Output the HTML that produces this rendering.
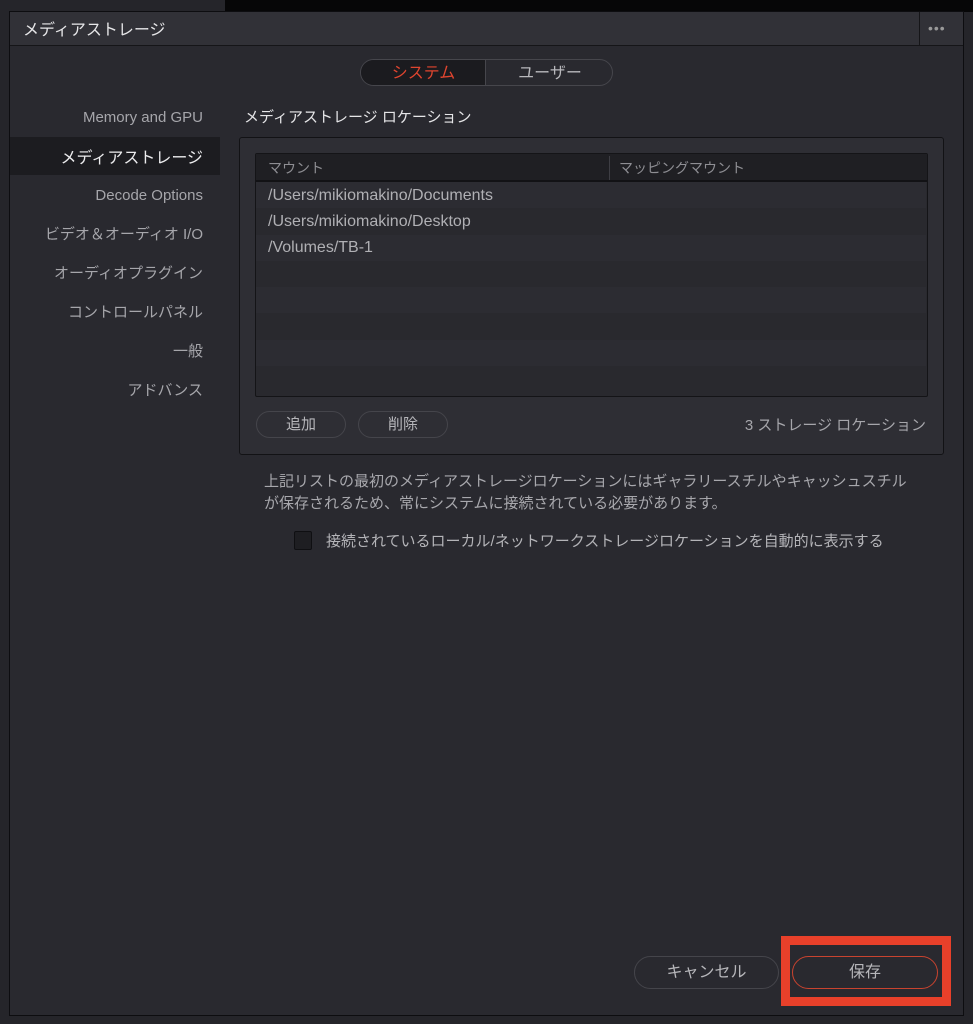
<!DOCTYPE html>
<html><head><meta charset="utf-8"><style>
*{margin:0;padding:0;box-sizing:border-box}
body{width:973px;height:1024px;background:#25252a;position:relative;overflow:hidden;font-family:"Liberation Sans","Noto Sans CJK JP",sans-serif;color:#b8b8bc}
.a{position:absolute}
.blk{left:225px;top:0;width:748px;height:12px;background:#060607}
.dlg{left:9px;top:11px;width:955px;height:1005px;background:#29292f;border:1px solid #0d0d10}
.title{left:10px;top:12px;width:953px;height:34px;background:#313137;border-bottom:1px solid #151518}
.t{font-size:16px;color:#e6e6e8}
.side{font-size:15px;color:#a6a6ab;text-align:right;width:193px;left:10px}
.row{left:256px;width:670px;height:26px}
.cell{font-size:16px;color:#b0b0b4;left:268px}
.btn{border:1px solid #45454b;border-radius:14px;height:27px;font-size:15px;color:#b6b6ba;text-align:center;line-height:25px}
</style></head><body>
<div class="a blk"></div>
<div class="a dlg"></div>
<div class="a title"></div>
<div class="a t" style="left:23px;top:16px">メディアストレージ</div>
<div class="a" style="left:919px;top:12px;width:1px;height:34px;background:#151518"></div>
<div class="a" style="left:928px;top:20px;font-size:14px;color:#999;letter-spacing:1px">•••</div>

<div class="a" style="left:360px;top:59px;width:253px;height:27px;border:1px solid #46464c;border-radius:14px;background:#29292f;overflow:hidden">
<div class="a" style="left:0;top:0;width:125px;height:25px;background:#1b1b1f;border-right:1px solid #46464c"></div>
<div class="a" style="left:0;top:2px;width:125px;text-align:center;font-size:16px;line-height:24px;color:#e0452f">システム</div>
<div class="a" style="left:126px;top:2px;width:126px;text-align:center;font-size:16px;line-height:24px;color:#b8b8bc">ユーザー</div>
</div>

<div class="a" style="left:10px;top:137px;width:210px;height:38px;background:#1c1c20"></div>
<div class="a side" style="top:109px">Memory and GPU</div>
<div class="a side" style="top:144px;color:#ececee;font-size:16px">メディアストレージ</div>
<div class="a side" style="top:187px">Decode Options</div>
<div class="a side" style="top:223px">ビデオ＆オーディオ I/O</div>
<div class="a side" style="top:262px">オーディオプラグイン</div>
<div class="a side" style="top:301px">コントロールパネル</div>
<div class="a side" style="top:340px">一般</div>
<div class="a side" style="top:379px">アドバンス</div>

<div class="a t" style="left:244px;top:106px;font-size:15px">メディアストレージ ロケーション</div>
<div class="a" style="left:239px;top:137px;width:705px;height:318px;background:#2e2e34;border:1px solid #121215;border-radius:3px"></div>
<div class="a" style="left:255px;top:153px;width:673px;height:244px;background:#29292e;border:1px solid #141417;border-radius:2px"></div>
<div class="a row" style="top:182px;background:#2c2c32"></div>
<div class="a row" style="top:235px;background:#2c2c32"></div>
<div class="a row" style="top:287px;background:#2c2c32"></div>
<div class="a row" style="top:340px;background:#2c2c32"></div>
<div class="a" style="left:256px;top:154px;width:671px;height:28px;background:#1f1f23;border-bottom:2px solid #121215"></div>
<div class="a" style="left:609px;top:156px;width:1px;height:24px;background:#3e3e44"></div>
<div class="a" style="left:268px;top:158px;font-size:14px;color:#8e8e93">マウント</div>
<div class="a" style="left:619px;top:158px;font-size:14px;color:#8e8e93">マッピングマウント</div>
<div class="a cell" style="top:187px">/Users/mikiomakino/Documents</div>
<div class="a cell" style="top:213px">/Users/mikiomakino/Desktop</div>
<div class="a cell" style="top:239px">/Volumes/TB-1</div>

<div class="a btn" style="left:256px;top:411px;width:90px">追加</div>
<div class="a btn" style="left:358px;top:411px;width:90px">削除</div>
<div class="a" style="left:680px;top:414px;width:246px;text-align:right;font-size:15px;color:#a6a6ab">3 ストレージ ロケーション</div>

<div class="a" style="left:264px;top:471px;font-size:15px;line-height:22px;color:#a8a8ad;width:690px">上記リストの最初のメディアストレージロケーションにはギャラリースチルやキャッシュスチル<br>が保存されるため、常にシステムに接続されている必要があります。</div>
<div class="a" style="left:294px;top:531px;width:18px;height:19px;background:#1e1e22;border:1px solid #0f0f12;border-radius:2px"></div>
<div class="a" style="left:326px;top:530px;font-size:15px;color:#b4b4b8">接続されているローカル/ネットワークストレージロケーションを自動的に表示する</div>

<div class="a btn" style="left:634px;top:956px;width:145px;height:33px;border-radius:17px;line-height:31px;font-size:16px">キャンセル</div>
<div class="a" style="left:781px;top:936px;width:170px;height:70px;border:9px solid #e8402a"></div>
<div class="a btn" style="left:792px;top:956px;width:146px;height:33px;border-radius:17px;line-height:31px;font-size:16px;border-color:#c8432f">保存</div>
</body></html>
